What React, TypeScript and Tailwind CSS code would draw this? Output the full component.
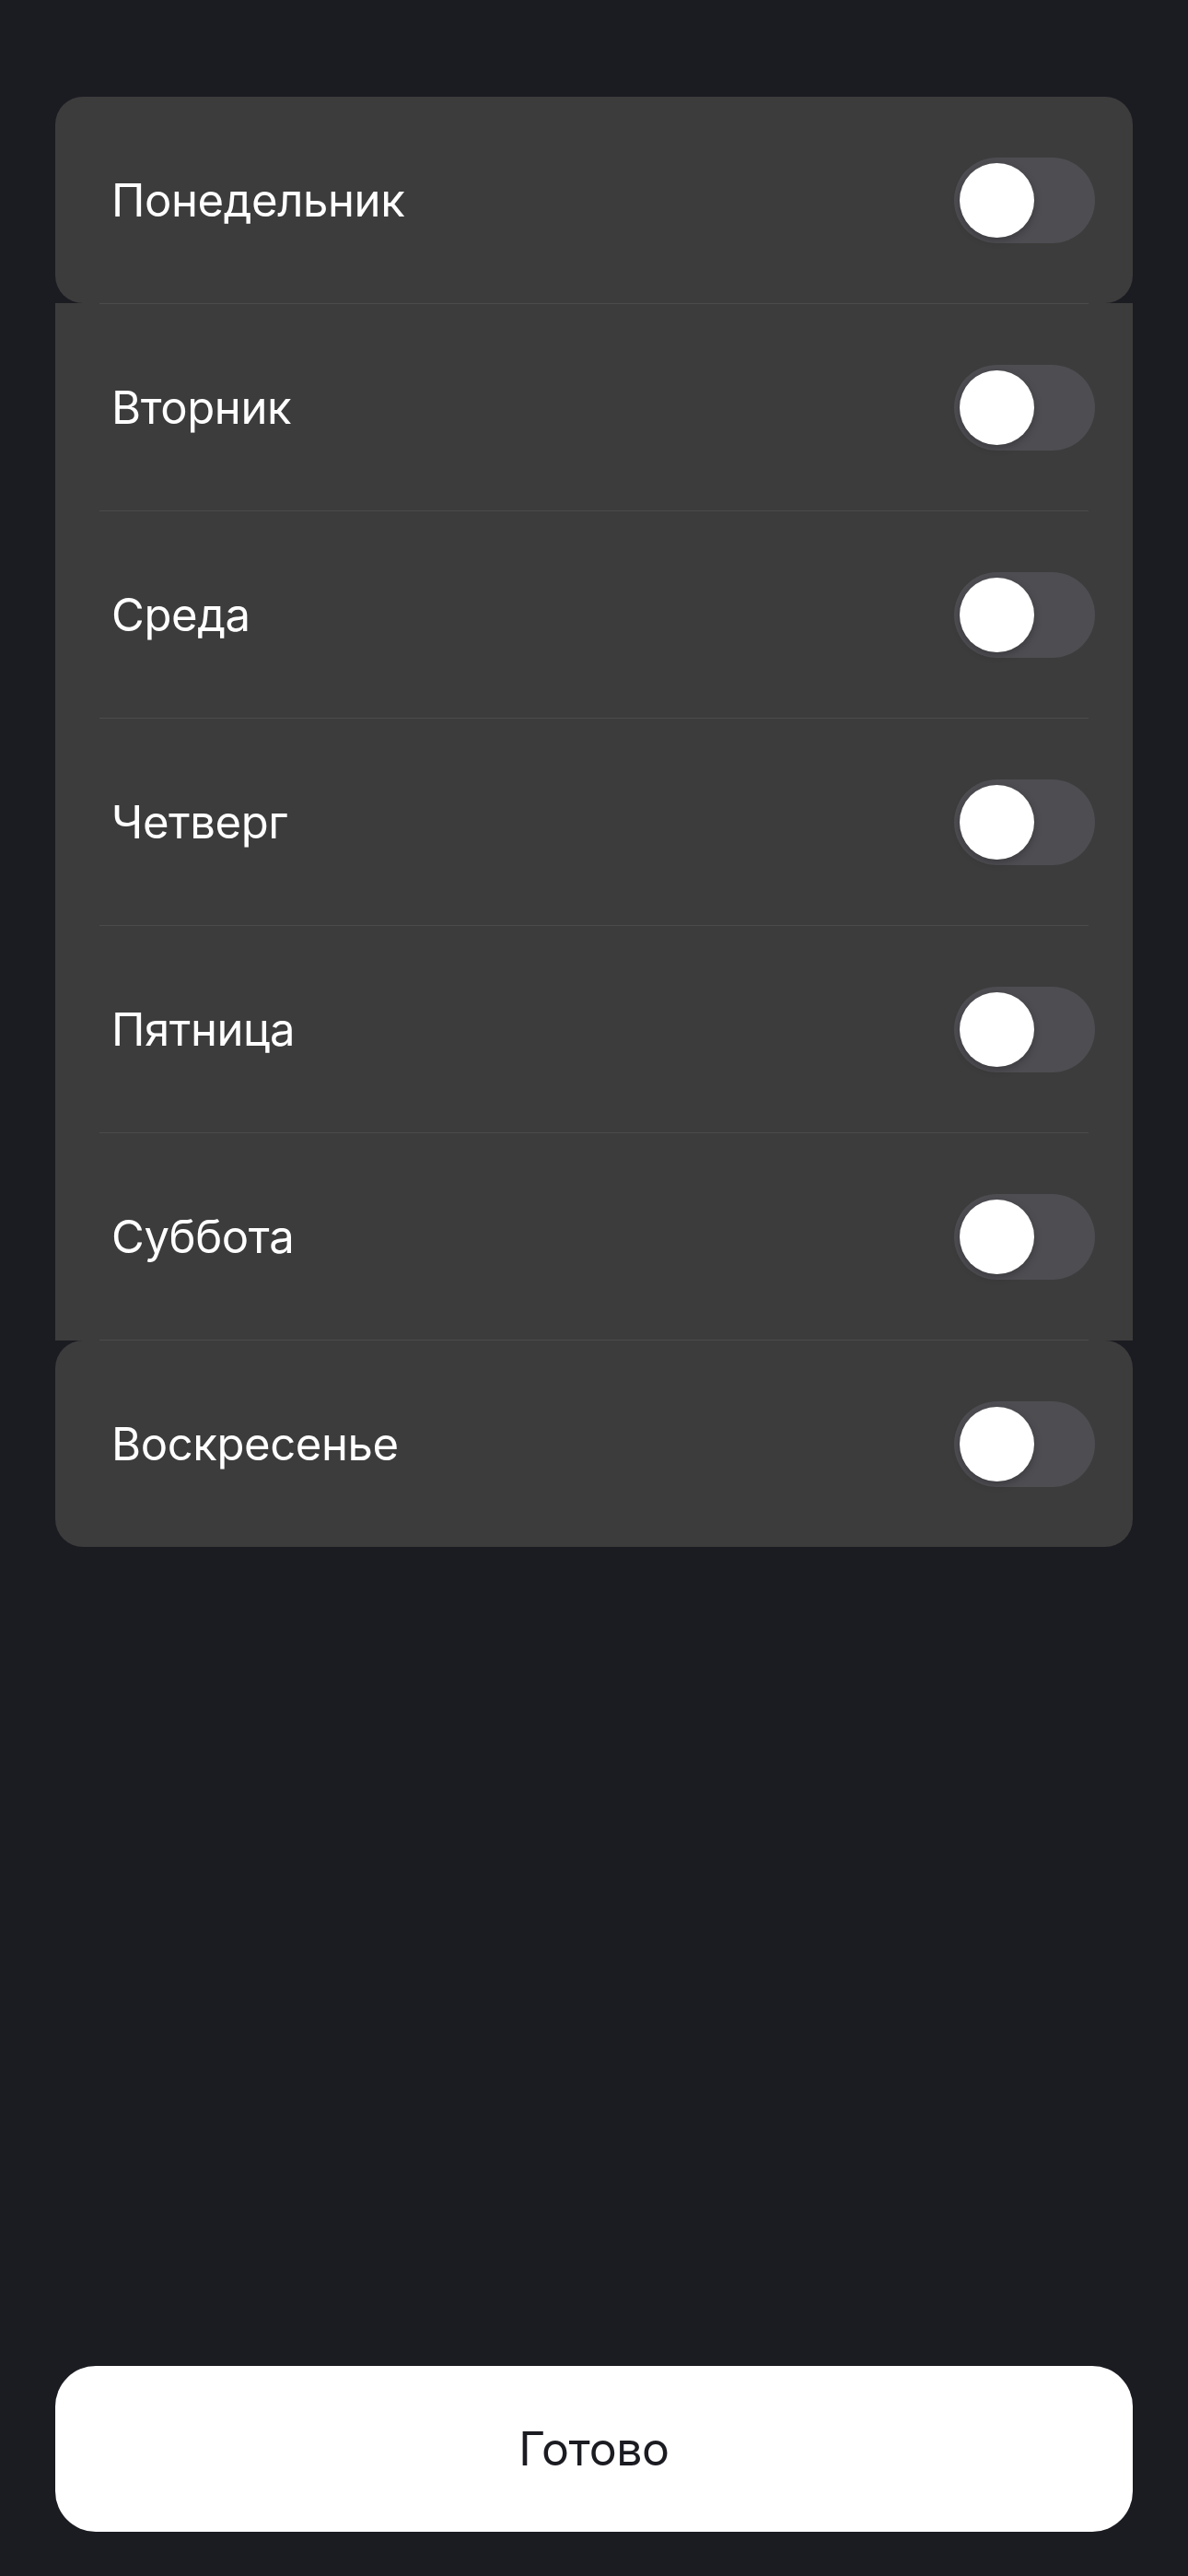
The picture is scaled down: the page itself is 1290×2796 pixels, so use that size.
import React from "react";

const days = ["Понедельник", "Вторник", "Среда", "Четверг", "Пятница", "Суббота", "Воскресенье"];

function Toggle() {
  return (
    <div className="relative h-[93px] w-[153px] shrink-0 rounded-full bg-[#4e4d52]">
      <div className="absolute left-[6px] top-[6px] h-[81px] w-[81px] rounded-full bg-white shadow-[0_3px_8px_rgba(0,0,0,0.25)]" />
    </div>
  );
}

function Row({ label }: { label: string }) {
  return (
    <div className="relative flex h-[224px] items-center justify-between pl-[61px] pr-[41px]">
      <span className="text-[49px] leading-none text-white tracking-[-0.4px]">{label}</span>
      <Toggle />
    </div>
  );
}

function Divider() {
  return (
    <div className="h-px bg-[#3c3c3c] px-[48px]">
      <div className="h-px bg-[#4b4b4b]" />
    </div>
  );
}

export default function App() {
  return (
    <div
      className="flex min-h-[2796px] w-[1290px] flex-col bg-[#1b1b22] px-[60px] pt-[105px] pb-[48px]"
      style={{ fontFamily: "Inter, 'Noto Sans', sans-serif" }}
    >
      <div className="flex flex-col">
        <div className="rounded-[30px] bg-[#3c3c3c]">
          <Row label={days[0]} />
        </div>
        <div className="bg-[#3c3c3c]">
          {days.slice(1, 6).map((d) => (
            <React.Fragment key={d}>
              <Divider />
              <Row label={d} />
            </React.Fragment>
          ))}
          <Divider />
        </div>
        <div className="rounded-[30px] bg-[#3c3c3c]">
          <Row label={days[6]} />
        </div>
      </div>
      <div className="mt-auto">
        <button className="flex h-[180px] w-full items-center justify-center rounded-[44px] bg-white text-[50px] leading-none tracking-[-0.4px] text-[#1b1b22]">
          Готово
        </button>
      </div>
    </div>
  );
}
